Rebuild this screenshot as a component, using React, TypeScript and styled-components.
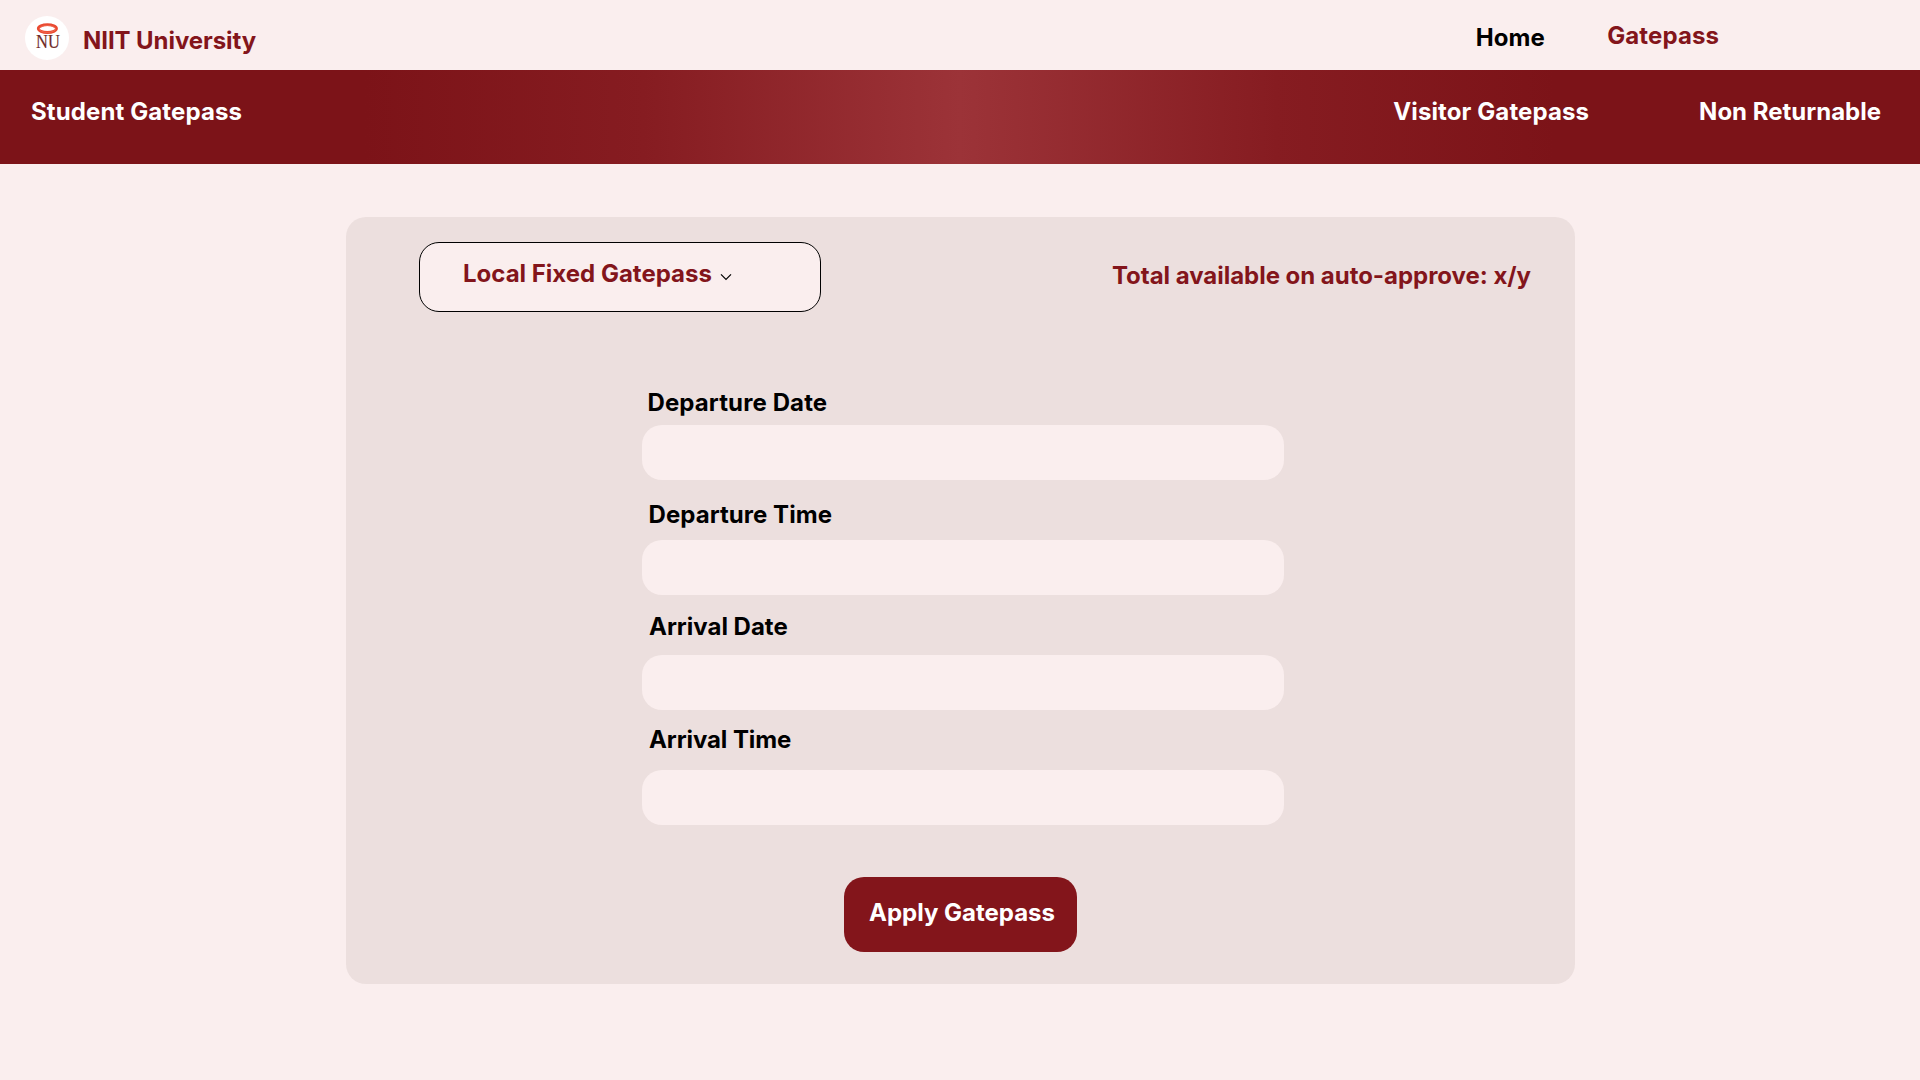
import React from "react";
import styled, { createGlobalStyle } from "styled-components";

const maroon = "#83151b";
const blush = "#faeeee";

const GlobalStyle = createGlobalStyle`
  *, *::before, *::after { box-sizing: border-box; }
  body {
    margin: 0;
    background: ${blush};
    color: #000;
    font: 700 24px/29px Inter, "Liberation Sans", sans-serif;
  }
`;

const Page = styled.div`
  display: flex;
  flex-direction: column;
  min-height: 1080px;
  white-space: nowrap;
`;

const Header = styled.header`
  display: flex;
  align-items: flex-start;
  height: 70px;
  padding: 16px 201px 0 25px;
`;

const Brand = styled.div`
  display: flex;
  align-items: flex-start;
  gap: 14px;
  margin-right: auto;
  color: ${maroon};
`;

const BrandName = styled.span`
  padding-top: 10px;
  letter-spacing: -0.07px;
`;

const Logo = styled.svg`
  display: block;
  width: 44px;
  height: 44px;
`;

const TopLink = styled.a<{ $active?: boolean; $top: number }>`
  padding-top: ${(p) => p.$top}px;
  color: ${(p) => (p.$active ? maroon : "#000")};
  letter-spacing: ${(p) => (p.$active ? 0.1 : 0)}px;
  & + & { margin-left: 62.5px; }
`;

const SubNav = styled.nav`
  display: flex;
  align-items: flex-start;
  height: 94px;
  padding: 27px 39px 0 31px;
  color: #fff;
  background: linear-gradient(90deg, #7c1318 19%, #861c21 33.5%, #9c3338 50%, #861c21 66.5%, #7c1318 81%);
`;

const SubNavLink = styled.a`
  letter-spacing: 0.11px;
  &:first-child { margin-right: auto; }
  &:last-child { margin-left: 110px; letter-spacing: 0; }
`;

const Card = styled.main`
  display: flex;
  flex-direction: column;
  width: 1229px;
  height: 767px;
  margin: 53px 0 0 346px;
  border-radius: 20px;
  background: #ecdfde;
`;

const CardTop = styled.div`
  display: flex;
  justify-content: space-between;
  align-items: flex-start;
  padding: 25px 44px 0 73px;
`;

const Select = styled.button`
  display: flex;
  align-items: flex-start;
  gap: 8px;
  width: 402px;
  height: 70px;
  padding: 16px 0 0 43px;
  border: 1px solid #000;
  border-radius: 20px;
  background: ${blush};
  color: ${maroon};
  font: inherit;
`;

const Chevron = styled.svg`
  width: 12px;
  height: 8px;
  margin-top: 14px;
`;

const Quota = styled.p`
  margin: 0;
  padding-top: 19px;
  color: ${maroon};
  letter-spacing: -0.03px;
`;

const Form = styled.form`
  display: flex;
  flex-direction: column;
  width: 643px;
  margin: 53px 0 0 296px;
`;

const Field = styled.label<{ $gap: number; $indent: number; $tracking: number }>`
  display: flex;
  flex-direction: column;
  justify-content: space-between;
  height: ${(p) => 84.5 + p.$gap}px;
  margin-top: ${(p) => 30.5 - p.$gap}px;
  span {
    padding-left: ${(p) => p.$indent}px;
    letter-spacing: ${(p) => p.$tracking}px;
  }
`;

const Input = styled.input`
  width: 642px;
  height: 55.5px;
  padding: 0 20px;
  border: 0;
  border-radius: 20px;
  background: ${blush};
  font: inherit;
`;

const Submit = styled.button`
  width: 233px;
  height: 75px;
  margin: 52px 0 0 202px;
  padding: 0 0 4px 3px;
  border: 0;
  border-radius: 20px;
  background: ${maroon};
  color: #fff;
  font: inherit;
`;

const fields = [
  { label: "Departure Date", gap: 7.5, indent: 5.5, tracking: 0.11 },
  { label: "Departure Time", gap: 10.5, indent: 6.5, tracking: 0.05 },
  { label: "Arrival Date", gap: 13.5, indent: 7, tracking: 0 },
  { label: "Arrival Time", gap: 15.5, indent: 7, tracking: -0.09 },
];

export default function App() {
  return (
    <Page>
      <GlobalStyle />
      <Header>
        <Brand>
          <Logo viewBox="0 0 44 44">
            <circle cx="22" cy="22" r="22" fill="#fff" />
            <ellipse cx="22.4" cy="12.6" rx="9.1" ry="3.9" fill="none" stroke="#ea4a32" strokeWidth="2.8" />
            <ellipse cx="22.4" cy="13" rx="8.1" ry="3.4" fill="none" stroke="#f0745c" strokeWidth="0.7" />
            <text x="11" y="31.5" fontFamily="Liberation Serif, serif" fontWeight="400" fontSize="19" textLength="23.8" lengthAdjust="spacingAndGlyphs" fill="#6e2a27" stroke="#6e2a27" strokeWidth="0.2">NU</text>
          </Logo>
          <BrandName>NIIT University</BrandName>
        </Brand>
        <TopLink $top={7}>Home</TopLink>
        <TopLink $top={5} $active>Gatepass</TopLink>
      </Header>
      <SubNav>
        <SubNavLink>Student Gatepass</SubNavLink>
        <SubNavLink>Visitor Gatepass</SubNavLink>
        <SubNavLink>Non Returnable</SubNavLink>
      </SubNav>
      <Card>
        <CardTop>
          <Select type="button">
            Local Fixed Gatepass
            <Chevron viewBox="0 0 12 8" fill="none" stroke="#000" strokeWidth="1.2">
              <path d="M1 1.3 6 6.3 11 1.3" />
            </Chevron>
          </Select>
          <Quota>Total available on auto-approve: x/y</Quota>
        </CardTop>
        <Form>
          {fields.map((f) => (
            <Field key={f.label} $gap={f.gap} $indent={f.indent} $tracking={f.tracking}>
              <span>{f.label}</span>
              <Input />
            </Field>
          ))}
          <Submit type="button">Apply Gatepass</Submit>
        </Form>
      </Card>
    </Page>
  );
}
